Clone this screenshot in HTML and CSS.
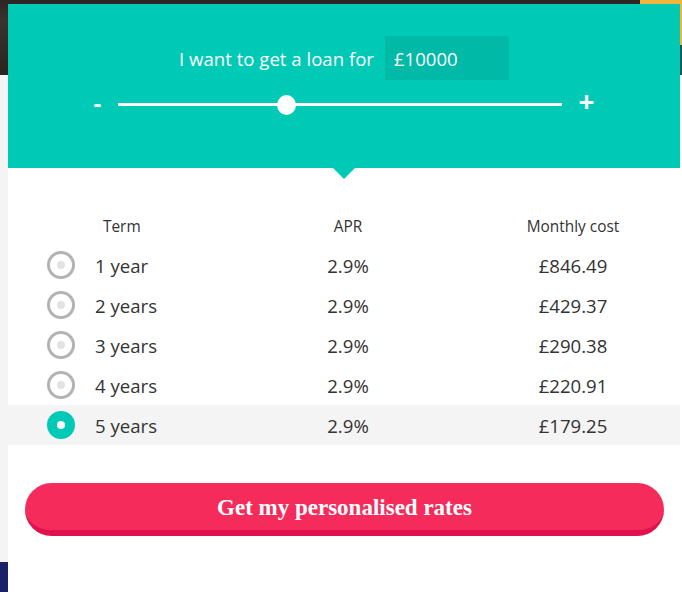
FILE: index.html
```html
<!DOCTYPE html>
<html lang="en">
<head>
<meta charset="utf-8">
<title>Loan calculator</title>
<link rel="stylesheet" href="styles.css">
</head>
<body>
<div class="page">
  <div class="card">
    <section class="loan">
      <div class="loan-row">
        <label class="loan-label" for="amount">I want to get a loan for</label>
        <div class="amount" id="amount">£10000</div>
      </div>
      <div class="slider-row">
        <span class="step minus">-</span>
        <div class="track"><span class="thumb"></span></div>
        <span class="step plus">+</span>
      </div>
    </section>

    <div class="rates">
      <div class="rate-row head">
        <div class="cell term-head">Term</div>
        <div class="cell center">APR</div>
        <div class="cell center cost">Monthly cost</div>
      </div>
      <div class="rate-row">
        <div class="cell term"><span class="radio"></span>1 year</div>
        <div class="cell center">2.9%</div>
        <div class="cell center cost">£846.49</div>
      </div>
      <div class="rate-row">
        <div class="cell term"><span class="radio"></span>2 years</div>
        <div class="cell center">2.9%</div>
        <div class="cell center cost">£429.37</div>
      </div>
      <div class="rate-row">
        <div class="cell term"><span class="radio"></span>3 years</div>
        <div class="cell center">2.9%</div>
        <div class="cell center cost">£290.38</div>
      </div>
      <div class="rate-row">
        <div class="cell term"><span class="radio"></span>4 years</div>
        <div class="cell center">2.9%</div>
        <div class="cell center cost">£220.91</div>
      </div>
      <div class="rate-row selected">
        <div class="cell term"><span class="radio on"></span>5 years</div>
        <div class="cell center">2.9%</div>
        <div class="cell center cost">£179.25</div>
      </div>
    </div>

    <div class="cta-wrap">
      <button class="cta" type="button">Get my personalised rates</button>
    </div>
  </div>
</div>
</body>
</html>
```

FILE: styles.css
```css
html, body {
  margin: 0;
  padding: 0;
  height: 100%;
  overflow: hidden;
}

body {
  font-family: "Open Sans", "Liberation Sans", sans-serif;
  color: #333;
}

.page {
  height: 592px;
  box-sizing: border-box;
  padding: 4px 2px 0 8px;
  background:
    linear-gradient(#f3b43c, #f3b43c) right top / 2px 45px no-repeat,
    linear-gradient(#0f5a55, #0f5a55) right 45px / 2px 30px no-repeat,
    linear-gradient(#ffffff, #ffffff) right 75px / 2px 100% no-repeat,
    linear-gradient(#f3b43c, #f3b43c) right top / 42px 4px no-repeat,
    linear-gradient(to bottom, #2c2622 0, #3a322c 20px, #2a2420 75px, #f4f4f4 75px, #f4f4f4 562px, #1b2166 562px);
}

.card {
  background: #fff;
  height: 100%;
  display: flex;
  flex-direction: column;
}

/* top teal section */
.loan {
  position: relative;
  background: #00c9b5;
  height: 164px;
  box-sizing: border-box;
  padding-top: 32px;
  display: flex;
  flex-direction: column;
  align-items: center;
}

.loan::after {
  content: "";
  position: absolute;
  left: 50%;
  bottom: -11px;
  margin-left: -11px;
  border-left: 11px solid transparent;
  border-right: 11px solid transparent;
  border-top: 11px solid #00c9b5;
}

.loan-row {
  display: flex;
  align-items: center;
  gap: 11px;
  color: #fff;
  font-size: 18.6px;
}

.amount {
  width: 124px;
  height: 44px;
  box-sizing: border-box;
  padding-left: 9px;
  background: #00b9a6;
  display: flex;
  align-items: center;
}

.slider-row {
  display: flex;
  align-items: center;
  margin-top: 13px;
  height: 22px;
}

.step {
  color: #fff;
  font-weight: 700;
  line-height: 1;
}

.minus {
  font-size: 24px;
  width: 10px;
  margin-right: 15px;
  position: relative;
  top: -1px;
}

.plus {
  font-size: 28px;
  margin-left: 16px;
  position: relative;
  top: -3px;
}

.track {
  position: relative;
  width: 444px;
  height: 3px;
  background: #fff;
}

.thumb {
  position: absolute;
  left: 159px;
  top: -8px;
  width: 19px;
  height: 20px;
  border-radius: 50%;
  background: #fff;
}

/* table */
.rates {
  padding-top: 40px;
}

.rate-row {
  display: grid;
  grid-template-columns: 226px 228px 1fr;
  align-items: center;
  height: 40px;
  font-size: 18.6px;
}

.rate-row.head {
  height: 38px;
  font-size: 15.4px;
  margin-top: -1px;
}

.rate-row.selected {
  background: #f4f4f4;
}

.cell.center {
  text-align: center;
}

.cell.cost {
  padding-left: 4px;
}

.term-head {
  padding-left: 95px;
}

.term {
  display: flex;
  align-items: center;
  padding-left: 39px;
  gap: 20px;
}

.radio {
  width: 28px;
  height: 28px;
  box-sizing: border-box;
  border: 3px solid #b3b3b3;
  border-radius: 50%;
  background: #fff;
  display: flex;
  align-items: center;
  justify-content: center;
}

.radio::after {
  content: "";
  width: 8px;
  height: 8px;
  border-radius: 50%;
  background: #e2e2e2;
}

.radio.on {
  border-color: #00c9b5;
  background: #00c9b5;
}

.radio.on::after {
  background: #fff;
}

/* CTA */
.cta-wrap {
  padding: 38px 16px 0 17px;
}

.cta {
  display: block;
  width: 100%;
  height: 53px;
  box-sizing: border-box;
  border: 0;
  border-bottom: 6px solid #e0124d;
  border-radius: 27px;
  background: #f52c5b;
  color: #fff;
  font-family: "Liberation Serif", "DejaVu Serif", serif;
  font-weight: 700;
  font-size: 23px;
  letter-spacing: 0;
  padding: 2px 0 0;
  cursor: pointer;
}
```
